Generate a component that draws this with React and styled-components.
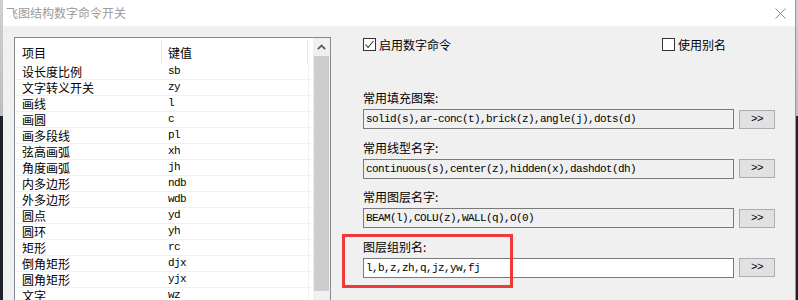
import styled, { createGlobalStyle } from 'styled-components'

const GlobalStyle = createGlobalStyle`
  html, body {
    margin: 0;
    padding: 0;
  }
  body {
    background: #1e2329;
    font-family: "Noto Sans CJK SC", "Noto Sans", sans-serif;
    color: #000;
  }
  * {
    box-sizing: border-box;
  }
`

const Screen = styled.div`
  display: flex;
  width: 798px;
  height: 300px;
  overflow: hidden;
`

const Edge = styled.div`
  flex: none;
  width: ${props => props.w}px;
  background: linear-gradient(to bottom, #cfcfcf 0, #bdbdbd 116px, #1e2329 116px);
`

const Dialog = styled.div`
  flex: 1;
  min-width: 0;
  display: flex;
  flex-direction: column;
  border-right: 1px solid #9a9a9a;
`

const TitleBar = styled.div`
  flex: none;
  height: 26px;
  background: #fff;
  display: flex;
  align-items: center;
  justify-content: space-between;
  padding: 0 9px 0 3px;
`

const Title = styled.span`
  font-size: 12px;
  line-height: 16px;
  color: #9a9a9a;
`

const Body = styled.div`
  flex: 1;
  background: #f0f0f0;
  display: flex;
  align-items: flex-start;
  gap: 32px;
  padding: 11px 0 0 11px;
  overflow: hidden;
`

const ListBox = styled.div`
  flex: none;
  width: 317px;
  height: 300px;
  border: 1px solid #828790;
  background: #fff;
  display: flex;
`

const Table = styled.div`
  flex: 1;
  display: flex;
  flex-direction: column;
`

const HeadRow = styled.div`
  display: grid;
  grid-template-columns: 147px 146px 1fr;
  height: 26px;
`

const HeadCell = styled.div`
  font-size: 12px;
  line-height: 15px;
  display: flex;
  align-items: center;
  padding-left: ${props => props.pad}px;
  border-right: ${props => (props.sep ? '1px solid #e5e5e5' : 'none')};
  margin-top: 2px;
`

const Row = styled.div`
  display: grid;
  grid-template-columns: 147px 147px 1fr;
  height: 16px;
  border-bottom: 1px solid #f0f0f0;
`

const NameCell = styled.div`
  font-size: 12px;
  line-height: 15px;
  padding-left: 7px;
  white-space: nowrap;
`

const KeyCell = styled.div`
  font-family: "Liberation Mono", monospace;
  font-size: 11px;
  letter-spacing: -0.6px;
  line-height: 15px;
  padding-left: 6px;
  border-right: 1px solid #f0f0f0;
`

const ScrollBar = styled.div`
  flex: none;
  width: 17px;
  background: #f0f0f0;
  display: flex;
  flex-direction: column;
  align-items: center;
`

const ArrowBtn = styled.div`
  width: 17px;
  height: 17px;
  display: flex;
  align-items: center;
  justify-content: center;
`

const Thumb = styled.div`
  width: 15px;
  height: 235px;
  margin-top: 1px;
  background: #cdcdcd;
`

const Side = styled.div`
  flex: none;
  width: 412px;
  display: flex;
  flex-direction: column;
`

const CheckRow = styled.div`
  display: grid;
  grid-template-columns: 299px auto;
  margin-top: 1px;
`

const CheckItem = styled.label`
  display: flex;
  align-items: center;
  gap: 3px;
  font-size: 12px;
  line-height: 13px;
  height: 13px;
`

const Box = styled.span`
  width: 13px;
  height: 13px;
  border: 1px solid #333;
  background: #fff;
  display: flex;
  align-items: center;
  justify-content: center;
`

const Groups = styled.div`
  display: flex;
  flex-direction: column;
  gap: 10.67px;
  margin-top: 39px;
`

const Group = styled.div`
  position: relative;
`

const FieldLabel = styled.div`
  font-size: 12px;
  line-height: 16px;
  height: 16px;
`

const FieldRow = styled.div`
  display: flex;
  align-items: center;
  gap: 5px;
  margin-top: 3px;
`

const Field = styled.div`
  width: 371px;
  height: 20px;
  border: 1px solid #7a7a7a;
  background: ${props => props.bg};
  padding-left: 2px;
  font-family: "Liberation Mono", monospace;
  font-size: 11px;
  letter-spacing: -0.6px;
  line-height: 18px;
  white-space: nowrap;
  overflow: hidden;
`

const MoreBtn = styled.button`
  width: 36px;
  height: 19px;
  padding: 0;
  border: 1px solid #adadad;
  background: #e1e1e1;
  font-family: "Liberation Mono", monospace;
  font-size: 11px;
  letter-spacing: -0.6px;
  line-height: 17px;
  color: #000;
`

const Mark = styled.div`
  position: absolute;
  left: -21px;
  top: -5px;
  width: 171px;
  height: 54px;
  border: 3px solid #f03a3a;
  pointer-events: none;
`

const rows = [
  ['设长度比例', 'sb'],
  ['文字转义开关', 'zy'],
  ['画线', 'l'],
  ['画圆', 'c'],
  ['画多段线', 'pl'],
  ['弦高画弧', 'xh'],
  ['角度画弧', 'jh'],
  ['内多边形', 'ndb'],
  ['外多边形', 'wdb'],
  ['圆点', 'yd'],
  ['圆环', 'yh'],
  ['矩形', 'rc'],
  ['倒角矩形', 'djx'],
  ['圆角矩形', 'yjx'],
  ['文字', 'wz'],
]

const fields = [
  { label: '常用填充图案:', value: 'solid(s),ar-conc(t),brick(z),angle(j),dots(d)', bg: '#f0f0f0' },
  { label: '常用线型名字:', value: 'continuous(s),center(z),hidden(x),dashdot(dh)', bg: '#f0f0f0' },
  { label: '常用图层名字:', value: 'BEAM(l),COLU(z),WALL(q),O(0)', bg: '#f0f0f0' },
  { label: '图层组别名:', value: 'l,b,z,zh,q,jz,yw,fj', bg: '#fff', marked: true },
]

function Check({ checked, children }) {
  return (
    <CheckItem>
      <Box>
        {checked && (
          <svg width="11" height="11" viewBox="0 0 11 11">
            <polyline points="1.5,5.5 4,8.5 9.5,2" fill="none" stroke="#333" strokeWidth="1.1" />
          </svg>
        )}
      </Box>
      {children}
    </CheckItem>
  )
}

export default function App() {
  return (
    <>
      <GlobalStyle />
      <Screen>
        <Edge w={3} />
        <Dialog>
          <TitleBar>
            <Title>飞图结构数字命令开关</Title>
            <svg width="11" height="11" viewBox="0 0 11 11">
              <path d="M0.5 0.5 L10.5 10.5 M10.5 0.5 L0.5 10.5" stroke="#8a8a8a" strokeWidth="1" />
            </svg>
          </TitleBar>
          <Body>
            <ListBox>
              <Table>
                <HeadRow>
                  <HeadCell pad={7} sep>项目</HeadCell>
                  <HeadCell pad={6} sep>键值</HeadCell>
                  <div />
                </HeadRow>
                {rows.map(([name, key]) => (
                  <Row key={name + key}>
                    <NameCell>{name}</NameCell>
                    <KeyCell>{key}</KeyCell>
                    <div />
                  </Row>
                ))}
              </Table>
              <ScrollBar>
                <ArrowBtn>
                  <svg width="9" height="6" viewBox="0 0 9 6">
                    <polyline points="0.8,5.2 4.5,1.5 8.2,5.2" fill="none" stroke="#606060" strokeWidth="1.8" />
                  </svg>
                </ArrowBtn>
                <Thumb />
              </ScrollBar>
            </ListBox>
            <Side>
              <CheckRow>
                <Check checked>启用数字命令</Check>
                <Check>使用别名</Check>
              </CheckRow>
              <Groups>
                {fields.map(f => (
                  <Group key={f.label}>
                    <FieldLabel>{f.label}</FieldLabel>
                    <FieldRow>
                      <Field bg={f.bg}>{f.value}</Field>
                      <MoreBtn>&gt;&gt;</MoreBtn>
                    </FieldRow>
                    {f.marked && <Mark />}
                  </Group>
                ))}
              </Groups>
            </Side>
          </Body>
        </Dialog>
        <Edge w={2} />
      </Screen>
    </>
  )
}
